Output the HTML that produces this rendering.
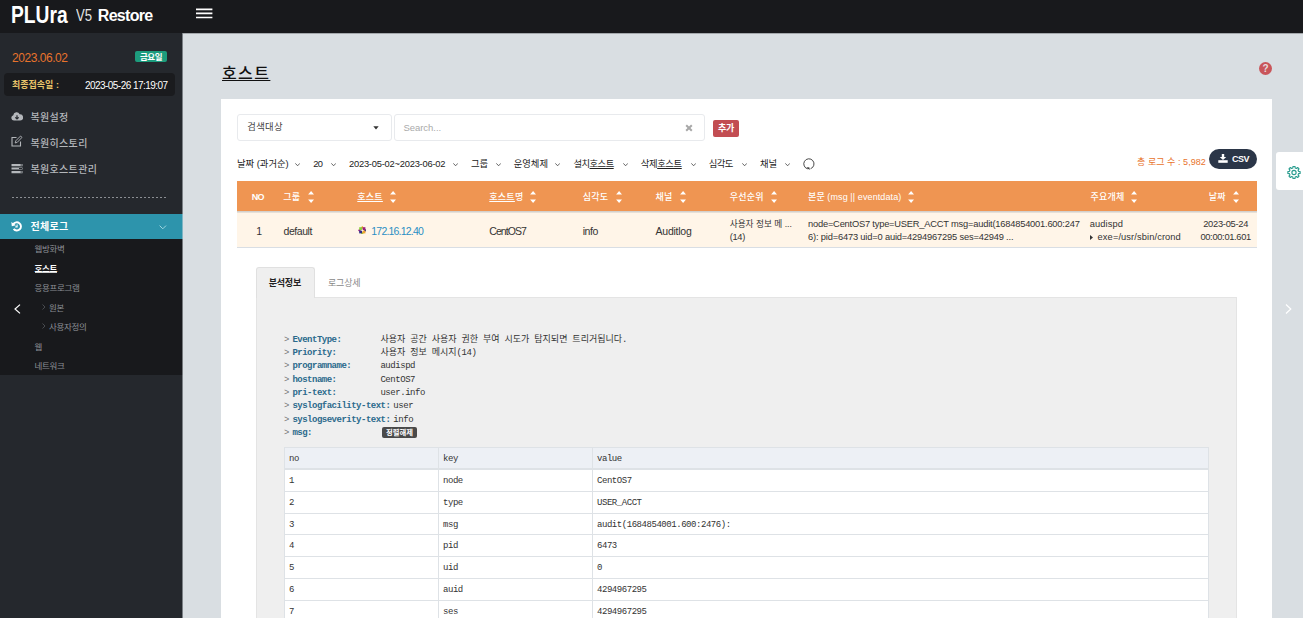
<!DOCTYPE html>
<html lang="ko">
<head>
<meta charset="utf-8">
<title>PLURA V5 Restore</title>
<style>
*{box-sizing:border-box;margin:0;padding:0}
html,body{width:1303px;height:618px;overflow:hidden;background:#d9dee2}
body{font-family:"Liberation Sans","Noto Sans CJK KR",sans-serif;font-size:11px;color:#333;position:relative}
.abs{position:absolute;white-space:nowrap;line-height:1}
.mono{font-family:"Liberation Mono","Noto Sans CJK KR",monospace}
.u{text-decoration:underline;text-decoration-thickness:0.75px;text-underline-offset:1px}
#topbar{left:0;top:0;width:1303px;height:33px;background:#18191c}
#sidebar{left:0;top:33px;width:182px;height:585px;background:#25282d}
#sbedge{left:182px;top:33px;width:1px;height:585px;background:#7b8085}
#card{left:221px;top:99px;width:1051px;height:519px;background:#fff}
.menu{color:#b4b7bb;font-size:10px;font-weight:500;letter-spacing:0.35px}
.sub{color:#8d9096;font-size:8.5px;letter-spacing:-0.3px}
.flt{font-size:9.33px;color:#222;letter-spacing:0}
.th{font-size:9px;color:#fff;font-weight:500;letter-spacing:0.25px}
.td{font-size:10.5px;color:#333;letter-spacing:-0.45px}
.td2{font-size:9.3px;color:#333;letter-spacing:-0.3px}
.mk{font-size:9px;font-weight:bold;color:#2b6a8c;letter-spacing:-0.5px}
.gt{font-size:9px;color:#777;letter-spacing:-0.45px}
.kr{letter-spacing:0;word-spacing:-0.45px}
.mv{font-size:9px;color:#333;letter-spacing:-0.45px}
.tc{font-size:9px;color:#333;letter-spacing:-0.45px}
.chev{position:absolute;width:5.2px;height:3.5px}
.sort{position:absolute;width:6.2px;height:12px}
</style>
</head>
<body>
<div id="topbar" class="abs"></div>
<div id="sidebar" class="abs"></div>
<div id="sbedge" class="abs"></div>
<div class="abs" style="left:183px;top:33px;width:1120px;height:1px;background:#a3a7ab"></div>

<!-- logo -->
<div class="abs" style="left:10.8px;top:3px;font-size:24.5px;font-weight:bold;color:#fff;letter-spacing:0;transform-origin:0 0;transform:scaleX(0.785)">PLUra</div>
<div class="abs" style="left:75.6px;top:8px;font-size:16px;color:#e4e4e4;letter-spacing:0;transform-origin:0 0;transform:scaleX(0.82)">V5</div>
<div class="abs" style="left:97.8px;top:8px;font-size:16px;font-weight:bold;color:#fff;letter-spacing:-0.7px">Restore</div>
<svg class="abs" style="left:196px;top:8px" width="17" height="11" viewBox="0 0 17 11"><path d="M0 1.3h16.4M0 5.4h16.4M0 9.5h16.4" stroke="#fff" stroke-width="1.7" fill="none"/></svg>

<!-- date -->
<div class="abs" style="left:12px;top:52px;font-size:12px;color:#e8732c;letter-spacing:-0.45px">2023.06.02</div>
<div class="abs" style="left:135px;top:51px;width:32px;height:11px;background:#1d9c7d;border-radius:2px"></div>
<div class="abs" style="left:135px;top:52.7px;width:32px;text-align:center;font-size:8.5px;font-weight:bold;color:#fff;letter-spacing:-0.5px">금요일</div>
<div class="abs" style="left:4px;top:73px;width:171px;height:23px;background:#1a1b1e;border-radius:4px"></div>
<div class="abs" style="left:12px;top:81px;font-size:9px;font-weight:bold;color:#e9c46a;letter-spacing:0">최종접속일 :</div>
<div class="abs" style="left:85px;top:81px;font-size:10px;color:#fff;letter-spacing:-0.55px">2023-05-26 17:19:07</div>

<!-- menu -->
<svg class="abs" style="left:11px;top:111px" width="12" height="11" viewBox="0 0 12 11"><path d="M3 9.6A2.7 2.7 0 0 1 2.3 4.3A3.3 3.3 0 0 1 8.6 3.2A3.2 3.2 0 0 1 9.2 9.6Z" fill="#b4b7bb"/><path d="M6 4.2v3.6M4.3 6.3L6 8L7.7 6.3" stroke="#25282d" stroke-width="1.2" fill="none"/></svg>
<div class="abs menu" style="left:30.4px;top:113.4px">복원설정</div>
<svg class="abs" style="left:11px;top:135px" width="12" height="12" viewBox="0 0 12 12"><path d="M5.5 2.5H1V11H9.5V6.5" fill="none" stroke="#b4b7bb" stroke-width="1.1"/><path d="M4.2 8L4.8 5.8L9.6 1L11 2.4L6.3 7.3Z" fill="none" stroke="#b4b7bb" stroke-width="0.9"/></svg>
<div class="abs menu" style="left:30.4px;top:139.4px">복원히스토리</div>
<svg class="abs" style="left:11px;top:163px" width="12" height="11" viewBox="0 0 12 11"><path d="M0.5 1h11v2.2h-11zM0.5 4.4h11v2.2h-11zM0.5 8h11v2.2h-11z" fill="#b4b7bb"/><path d="M8 5h3v1h-3zM9.5 8.6h1.5v1h-1.5zM9.5 1.6h1.5v1h-1.5z" fill="#25282d"/></svg>
<div class="abs menu" style="left:30.4px;top:165.2px">복원호스트관리</div>
<div class="abs" style="left:12px;top:197px;width:156px;height:1px;background:repeating-linear-gradient(90deg,#8b8e93 0,#8b8e93 2px,transparent 2px,transparent 4px)"></div>

<div class="abs" style="left:0;top:214px;width:182px;height:25px;background:#2d94ac"></div><div class="abs" style="left:182px;top:214px;width:1px;height:25px;background:#7fb5c4"></div>
<svg class="abs" style="left:11px;top:221px" width="12" height="11" viewBox="0 0 12 11"><path d="M2.3 3.3A4.1 4.1 0 1 1 2.6 7.9" fill="none" stroke="#fff" stroke-width="1.9"/><path d="M0.3 0.9L0.8 5.3L5 4.2Z" fill="#fff"/><path d="M6.1 3.4V5.9H4.3" fill="none" stroke="#fff" stroke-width="1.1"/></svg>
<div class="abs" style="left:30.4px;top:222px;font-size:10px;font-weight:bold;color:#fff;letter-spacing:0.35px">전체로그</div>
<svg class="abs" style="left:159px;top:225px" width="8" height="5" viewBox="0 0 8 5"><path d="M0.6 0.6L3.8 3.8L7 0.6" fill="none" stroke="#9fd6e0" stroke-width="1"/></svg>
<div class="abs" style="left:0;top:239px;width:182px;height:136px;background:#18191c"></div><div class="abs" style="left:182px;top:239px;width:1px;height:136px;background:#74787c"></div>
<div class="abs sub" style="left:34.5px;top:245px">웹방화벽</div>
<div class="abs sub" style="left:34.5px;top:264.7px;color:#fff;font-weight:bold;border-bottom:1px solid rgba(255,255,255,0.8);height:7.9px;box-sizing:border-box">호스트</div>
<div class="abs sub" style="left:34.5px;top:283.7px">응용프로그램</div>
<svg class="abs" style="left:14px;top:304px" width="7" height="10" viewBox="0 0 7 10"><path d="M6 0.6L1 5L6 9.4" fill="none" stroke="#fff" stroke-width="1.2"/></svg>
<svg class="abs" style="left:42px;top:304px" width="4" height="6" viewBox="0 0 4 6"><path d="M0.5 0.5L3 3L0.5 5.5" fill="none" stroke="#55585e" stroke-width="0.8"/></svg>
<div class="abs sub" style="left:49px;top:303.7px">원본</div>
<svg class="abs" style="left:42px;top:323px" width="4" height="6" viewBox="0 0 4 6"><path d="M0.5 0.5L3 3L0.5 5.5" fill="none" stroke="#55585e" stroke-width="0.8"/></svg>
<div class="abs sub" style="left:49px;top:322.7px">사용자정의</div>
<div class="abs sub" style="left:34.5px;top:342.7px">웹</div>
<div class="abs sub" style="left:34.5px;top:361.7px">네트워크</div>

<!-- heading -->
<div class="abs u" style="left:222px;top:66px;font-size:16px;font-weight:500;color:#111;letter-spacing:1.4px;text-underline-offset:1px;text-decoration-thickness:1px">호스트</div>
<div class="abs" style="left:1259px;top:62px;width:13px;height:13px;border-radius:50%;background:#c9555a"></div>
<div class="abs" style="left:1259px;top:63.5px;width:13px;text-align:center;font-size:10px;font-weight:bold;color:#e6dcdf">?</div>

<div id="card" class="abs"></div>

<!-- search -->
<div class="abs" style="left:237px;top:114px;width:155px;height:27px;border:1px solid #e8eaed;border-radius:3px;background:#fff"></div>
<div class="abs" style="left:247.3px;top:123px;font-size:9.33px;color:#444;letter-spacing:0.3px">검색대상</div>
<svg class="abs" style="left:373px;top:126px" width="6" height="4" viewBox="0 0 6 4"><path d="M0.3 0.3H5.7L3 3.6Z" fill="#333"/></svg>
<div class="abs" style="left:394px;top:114px;width:311px;height:27px;border:1px solid #e8eaed;border-radius:3px;background:#fff"></div>
<div class="abs" style="left:403.5px;top:123px;font-size:9.5px;color:#aaa;letter-spacing:-0.05px">Search...</div>
<svg class="abs" style="left:685px;top:124px" width="8" height="8" viewBox="0 0 8 8"><path d="M1.2 1.2L6.8 6.8M6.8 1.2L1.2 6.8" stroke="#a8a8a8" stroke-width="2"/></svg>
<div class="abs" style="left:713px;top:120px;width:26px;height:17px;background:#c24d52;border-radius:2px"></div>
<div class="abs" style="left:713px;top:124px;width:26px;text-align:center;font-size:9px;font-weight:bold;color:#fff;letter-spacing:-0.3px">추가</div>

<!-- filters -->
<div class="abs flt" style="left:237px;top:159.5px">날짜 (과거순)</div><svg class="chev" style="left:295.3px;top:163px" viewBox="0 0 6 4"><path d="M0.4 0.4L3 3.2L5.6 0.4" fill="none" stroke="#444" stroke-width="0.95"/></svg>
<div class="abs flt" style="left:313.3px;top:159.5px;letter-spacing:-0.8px">20</div><svg class="chev" style="left:331.2px;top:163px" viewBox="0 0 6 4"><path d="M0.4 0.4L3 3.2L5.6 0.4" fill="none" stroke="#444" stroke-width="0.95"/></svg>
<div class="abs flt" style="left:349px;top:159.5px;letter-spacing:-0.22px">2023-05-02~2023-06-02</div><svg class="chev" style="left:453px;top:163px" viewBox="0 0 6 4"><path d="M0.4 0.4L3 3.2L5.6 0.4" fill="none" stroke="#444" stroke-width="0.95"/></svg>
<div class="abs flt" style="left:471px;top:159.5px">그룹</div><svg class="chev" style="left:495.5px;top:163px" viewBox="0 0 6 4"><path d="M0.4 0.4L3 3.2L5.6 0.4" fill="none" stroke="#444" stroke-width="0.95"/></svg>
<div class="abs flt" style="left:513.7px;top:159.5px">운영체제</div><svg class="chev" style="left:555.2px;top:163px" viewBox="0 0 6 4"><path d="M0.4 0.4L3 3.2L5.6 0.4" fill="none" stroke="#444" stroke-width="0.95"/></svg>
<div class="abs flt" style="left:573.5px;top:159.5px;letter-spacing:-0.55px">설치<span class="u">호스트</span></div><svg class="chev" style="left:622.6px;top:163px" viewBox="0 0 6 4"><path d="M0.4 0.4L3 3.2L5.6 0.4" fill="none" stroke="#444" stroke-width="0.95"/></svg>
<div class="abs flt" style="left:640.8px;top:159.5px;letter-spacing:-0.4px">삭제<span class="u">호스트</span></div><svg class="chev" style="left:690.8px;top:163px" viewBox="0 0 6 4"><path d="M0.4 0.4L3 3.2L5.6 0.4" fill="none" stroke="#444" stroke-width="0.95"/></svg>
<div class="abs flt" style="left:708.7px;top:159.5px;letter-spacing:-0.5px">심각도</div><svg class="chev" style="left:741.8px;top:163px" viewBox="0 0 6 4"><path d="M0.4 0.4L3 3.2L5.6 0.4" fill="none" stroke="#444" stroke-width="0.95"/></svg>
<div class="abs flt" style="left:760px;top:159.5px">채널</div><svg class="chev" style="left:784.5px;top:163px" viewBox="0 0 6 4"><path d="M0.4 0.4L3 3.2L5.6 0.4" fill="none" stroke="#444" stroke-width="0.95"/></svg>
<svg class="abs" style="left:802.6px;top:158px" width="12" height="12" viewBox="0 0 12 12"><path d="M4.9 10.9A5.1 5.1 0 1 1 7.6 10.7" fill="none" stroke="#333" stroke-width="0.9"/><path d="M3.6 9.2L6.6 11.9L6.4 9.4Z" fill="#222"/></svg>

<div class="abs" style="left:1137px;top:158px;font-size:9px;color:#e8732c;letter-spacing:0.05px">총 로그 수 : 5,982</div>
<div class="abs" style="left:1209px;top:149px;width:48px;height:19.5px;background:#2b3648;border-radius:10px"></div>
<svg class="abs" style="left:1218px;top:154px" width="10" height="9" viewBox="0 0 10 9"><path d="M3.8 0h2.4v3h2L5 6L1.8 3h2z" fill="#fff"/><path d="M0.3 6.2h9.4v2.6H0.3z" fill="#fff"/></svg>
<div class="abs" style="left:1232px;top:154.5px;font-size:9px;font-weight:bold;color:#fff;letter-spacing:-0.5px">CSV</div>

<!-- table -->
<div class="abs" style="left:237px;top:181px;width:1020px;height:30px;background:#ef9552"></div>
<div class="abs" style="left:237px;top:211px;width:1020px;height:1px;background:#d3d0cc"></div>
<div class="abs" style="left:237px;top:212px;width:1020px;height:36px;background:#fff5e8;border-bottom:1px solid #d9dee4"></div><div class="abs" style="left:237px;top:212px;width:1020px;height:1px;background:#e6e0d8"></div>
<div class="abs th" style="left:251.7px;top:192.7px;letter-spacing:-0.6px;font-weight:bold">NO</div>
<div class="abs th" style="left:283.3px;top:192.7px">그룹</div><svg class="sort" style="left:307.8px;top:191px" viewBox="0 0 6 12"><path d="M3 0L6 3.6H0Z M3 12L6 8.4H0Z" fill="#fff"/></svg>
<div class="abs th u" style="left:357.3px;top:192.7px">호스트</div><svg class="sort" style="left:389.8px;top:191px" viewBox="0 0 6 12"><path d="M3 0L6 3.6H0Z M3 12L6 8.4H0Z" fill="#fff"/></svg>
<div class="abs th" style="left:489.3px;top:192.7px"><span class="u">호스트</span>명</div><svg class="sort" style="left:530.3px;top:191px" viewBox="0 0 6 12"><path d="M3 0L6 3.6H0Z M3 12L6 8.4H0Z" fill="#fff"/></svg>
<div class="abs th" style="left:582.7px;top:192.7px">심각도</div><svg class="sort" style="left:615.5px;top:191px" viewBox="0 0 6 12"><path d="M3 0L6 3.6H0Z M3 12L6 8.4H0Z" fill="#fff"/></svg>
<div class="abs th" style="left:655.6px;top:192.7px">채널</div><svg class="sort" style="left:680px;top:191px" viewBox="0 0 6 12"><path d="M3 0L6 3.6H0Z M3 12L6 8.4H0Z" fill="#fff"/></svg>
<div class="abs th" style="left:729.7px;top:192.7px">우선순위</div><svg class="sort" style="left:770.6px;top:191px" viewBox="0 0 6 12"><path d="M3 0L6 3.6H0Z M3 12L6 8.4H0Z" fill="#fff"/></svg>
<div class="abs th" style="left:808px;top:192.7px;letter-spacing:0.1px">본문 (msg || eventdata)</div><svg class="sort" style="left:908.2px;top:191px" viewBox="0 0 6 12"><path d="M3 0L6 3.6H0Z M3 12L6 8.4H0Z" fill="#fff"/></svg>
<div class="abs th" style="left:1090.4px;top:192.7px">주요개체</div><svg class="sort" style="left:1131px;top:191px" viewBox="0 0 6 12"><path d="M3 0L6 3.6H0Z M3 12L6 8.4H0Z" fill="#fff"/></svg>
<div class="abs th" style="left:1208.8px;top:192.7px">날짜</div><svg class="sort" style="left:1232.5px;top:191px" viewBox="0 0 6 12"><path d="M3 0L6 3.6H0Z M3 12L6 8.4H0Z" fill="#fff"/></svg>

<div class="abs td" style="left:256.3px;top:225.5px">1</div>
<div class="abs td" style="left:283.5px;top:225.5px">default</div>
<svg class="abs" style="left:357.7px;top:225.7px" width="8.6" height="8.6" viewBox="0 0 10 10"><path d="M5 0L6.6 1.6L5 3.2L3.4 1.6Z" fill="#efa724"/><path d="M10 5L8.4 6.6L6.8 5L8.4 3.4Z" fill="#2e2a85"/><path d="M5 10L3.4 8.4L5 6.8L6.6 8.4Z" fill="#9ccd2a"/><path d="M0 5L1.6 3.4L3.2 5L1.6 6.6Z" fill="#a02585"/><rect x="1.4" y="1.4" width="3.3" height="3.3" fill="#8ccf3a"/><rect x="5.3" y="1.4" width="3.3" height="3.3" fill="#9b1f7a"/><rect x="5.3" y="5.3" width="3.3" height="3.3" fill="#f0a030"/><rect x="1.4" y="5.3" width="3.3" height="3.3" fill="#2e2a85"/><path d="M4.6 4L6 4.6L5.4 6L4 5.4Z" fill="#fff5e8"/></svg>
<div class="abs td" style="left:371.3px;top:225.5px;color:#2b8fc4;letter-spacing:-0.8px">172.16.12.40</div>
<div class="abs td" style="left:489.3px;top:225.5px;letter-spacing:-0.95px">CentOS7</div>
<div class="abs td" style="left:582.7px;top:225.5px">info</div>
<div class="abs td" style="left:655.6px;top:225.5px;letter-spacing:-0.25px">Auditlog</div>
<div class="abs td2" style="left:729.7px;top:219.5px;font-size:8.67px;letter-spacing:0">사용자 정보 메 ...</div>
<div class="abs td2" style="left:729.7px;top:232.5px">(14)</div>
<div class="abs td2" style="left:808px;top:219.5px;letter-spacing:-0.2px">node=CentOS7 type=USER_ACCT msg=audit(1684854001.600:247</div>
<div class="abs td2" style="left:808px;top:232.5px;letter-spacing:-0.17px">6): pid=6473 uid=0 auid=4294967295 ses=42949 ...</div>
<div class="abs td2" style="left:1089.7px;top:219.5px;letter-spacing:0.1px">audispd</div>
<svg class="abs" style="left:1090px;top:235px" width="3" height="5" viewBox="0 0 3 5"><path d="M0 0L3 2.5L0 5Z" fill="#333"/></svg><div class="abs td2" style="left:1097.6px;top:232.5px;letter-spacing:0.1px">exe=/usr/sbin/crond</div>
<div class="abs td2" style="left:1175.7px;top:219.5px;width:100px;text-align:center;letter-spacing:-0.25px">2023-05-24</div>
<div class="abs td2" style="left:1175.7px;top:232.5px;width:100px;text-align:center;letter-spacing:-0.31px">00:00:01.601</div>

<!-- detail -->
<div class="abs" style="left:256px;top:297px;width:981px;height:330px;background:#efefef;border:1px solid #e4e4e4"></div>
<div class="abs" style="left:256px;top:267px;width:59px;height:31px;background:#efefef;border:1px solid #e0e0e0;border-bottom:none;border-radius:3px 3px 0 0"></div>
<div class="abs" style="left:268.7px;top:279px;font-size:9px;font-weight:bold;color:#222;letter-spacing:-0.2px">분석정보</div>
<div class="abs" style="left:328px;top:279px;font-size:9px;color:#888;letter-spacing:-0.2px">로그상세</div>

<div class="abs mono gt" style="left:284px;top:335.7px">&gt;</div><div class="abs mono mk" style="left:292.4px;top:335.7px">EventType:</div>
<div class="abs mono mv" style="left:380.4px;top:335.7px"><span class="kr">사용자 공간 사용자 권한 부여 시도가 탐지되면 트리거됩니다.</span></div>
<div class="abs mono gt" style="left:284px;top:349.0px">&gt;</div><div class="abs mono mk" style="left:292.4px;top:349.0px">Priority:</div>
<div class="abs mono mv" style="left:380.4px;top:349.0px"><span class="kr">사용자 정보 메시지</span>(14)</div>
<div class="abs mono gt" style="left:284px;top:362.4px">&gt;</div><div class="abs mono mk" style="left:292.4px;top:362.4px">programname:</div>
<div class="abs mono mv" style="left:380.4px;top:362.4px">audispd</div>
<div class="abs mono gt" style="left:284px;top:375.7px">&gt;</div><div class="abs mono mk" style="left:292.4px;top:375.7px">hostname:</div>
<div class="abs mono mv" style="left:380.4px;top:375.7px">CentOS7</div>
<div class="abs mono gt" style="left:284px;top:389.0px">&gt;</div><div class="abs mono mk" style="left:292.4px;top:389.0px">pri-text:</div>
<div class="abs mono mv" style="left:380.4px;top:389.0px">user.info</div>
<div class="abs mono gt" style="left:284px;top:402.4px">&gt;</div><div class="abs mono mk" style="left:292.4px;top:402.4px">syslogfacility-text:</div>
<div class="abs mono mv" style="left:393.3px;top:402.4px">user</div>
<div class="abs mono gt" style="left:284px;top:415.7px">&gt;</div><div class="abs mono mk" style="left:292.4px;top:415.7px">syslogseverity-text:</div>
<div class="abs mono mv" style="left:393.3px;top:415.7px">info</div>
<div class="abs mono gt" style="left:284px;top:429.0px">&gt;</div><div class="abs mono mk" style="left:292.4px;top:429.0px">msg:</div>
<div class="abs" style="left:382px;top:427.3px;width:35px;height:10.5px;background:#4a4a4a;border-radius:2px"></div>
<div class="abs" style="left:382px;top:428.7px;width:35px;text-align:center;font-size:7.33px;font-weight:bold;color:#fff;letter-spacing:0">정렬해제</div>

<!-- inner table -->
<div class="abs" style="left:284px;top:447px;width:925px;height:180px;background:#fff;border:1px solid #dee2e6"></div>
<div class="abs" style="left:284px;top:447px;width:925px;height:23px;background:#edf0f5;border:1px solid #dee2e6;border-bottom:2px solid #dee2e6"></div>
<div class="abs" style="left:438px;top:447px;width:1px;height:180px;background:#dee2e6"></div>
<div class="abs" style="left:592px;top:447px;width:1px;height:180px;background:#dee2e6"></div>
<div class="abs" style="left:284px;top:491px;width:925px;height:1px;background:#dee2e6"></div>
<div class="abs" style="left:284px;top:513px;width:925px;height:1px;background:#dee2e6"></div>
<div class="abs" style="left:284px;top:534px;width:925px;height:1px;background:#dee2e6"></div>
<div class="abs" style="left:284px;top:556px;width:925px;height:1px;background:#dee2e6"></div>
<div class="abs" style="left:284px;top:578px;width:925px;height:1px;background:#dee2e6"></div>
<div class="abs" style="left:284px;top:600px;width:925px;height:1px;background:#dee2e6"></div>

<div class="abs mono tc" style="left:289px;top:455px">no</div><div class="abs mono tc" style="left:443px;top:455px">key</div><div class="abs mono tc" style="left:597px;top:455px">value</div>
<div class="abs mono tc" style="left:289px;top:477px">1</div><div class="abs mono tc" style="left:443px;top:477px">node</div><div class="abs mono tc" style="left:597px;top:477px">CentOS7</div>
<div class="abs mono tc" style="left:289px;top:499px">2</div><div class="abs mono tc" style="left:443px;top:499px">type</div><div class="abs mono tc" style="left:597px;top:499px">USER_ACCT</div>
<div class="abs mono tc" style="left:289px;top:521px">3</div><div class="abs mono tc" style="left:443px;top:521px">msg</div><div class="abs mono tc" style="left:597px;top:521px">audit(1684854001.600:2476):</div>
<div class="abs mono tc" style="left:289px;top:542px">4</div><div class="abs mono tc" style="left:443px;top:542px">pid</div><div class="abs mono tc" style="left:597px;top:542px">6473</div>
<div class="abs mono tc" style="left:289px;top:564px">5</div><div class="abs mono tc" style="left:443px;top:564px">uid</div><div class="abs mono tc" style="left:597px;top:564px">0</div>
<div class="abs mono tc" style="left:289px;top:586px">6</div><div class="abs mono tc" style="left:443px;top:586px">auid</div><div class="abs mono tc" style="left:597px;top:586px">4294967295</div>
<div class="abs mono tc" style="left:289px;top:608px">7</div><div class="abs mono tc" style="left:443px;top:608px">ses</div><div class="abs mono tc" style="left:597px;top:608px">4294967295</div>

<!-- right side -->
<div class="abs" style="left:1276px;top:151.5px;width:30px;height:38.5px;background:#fff;border-radius:3px 0 0 3px"></div>
<svg class="abs" style="left:1287px;top:166px" width="14" height="13" viewBox="0 0 14 13"><path d="M6.03 0.38 L7.97 0.38 L8.17 1.95 L9.39 2.45 L10.64 1.48 L12.02 2.86 L11.05 4.11 L11.55 5.33 L13.12 5.53 L13.12 7.47 L11.55 7.67 L11.05 8.89 L12.02 10.14 L10.64 11.52 L9.39 10.55 L8.17 11.05 L7.97 12.62 L6.03 12.62 L5.83 11.05 L4.61 10.55 L3.36 11.52 L1.98 10.14 L2.95 8.89 L2.45 7.67 L0.88 7.47 L0.88 5.53 L2.45 5.33 L2.95 4.11 L1.98 2.86 L3.36 1.48 L4.61 2.45 L5.83 1.95Z" fill="none" stroke="#2a9d8f" stroke-width="1.15" stroke-linejoin="round"/><circle cx="7" cy="6.5" r="2.1" fill="none" stroke="#2a9d8f" stroke-width="1.15"/></svg>
<svg class="abs" style="left:1284.6px;top:304.4px" width="7" height="10" viewBox="0 0 7 10"><path d="M1 0.5L5.8 5L1 9.5" fill="none" stroke="#fff" stroke-width="1.2"/></svg>
</body>
</html>
